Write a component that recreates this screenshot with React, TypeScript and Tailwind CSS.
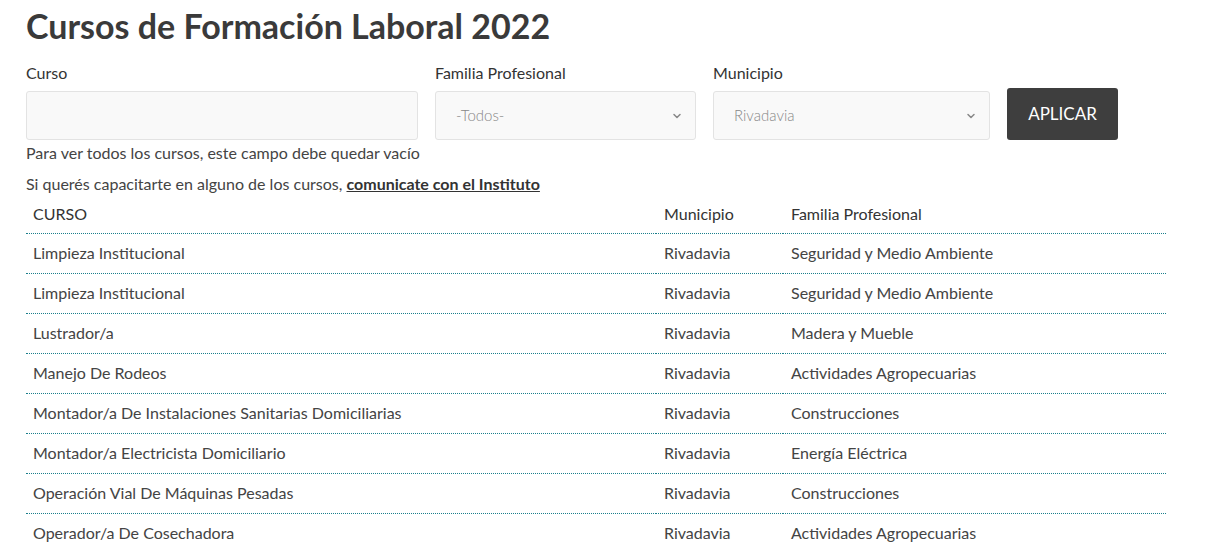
import React from 'react';

const cursos = [
  ['Limpieza Institucional', 'Rivadavia', 'Seguridad y Medio Ambiente'],
  ['Limpieza Institucional', 'Rivadavia', 'Seguridad y Medio Ambiente'],
  ['Lustrador/a', 'Rivadavia', 'Madera y Mueble'],
  ['Manejo De Rodeos', 'Rivadavia', 'Actividades Agropecuarias'],
  ['Montador/a De Instalaciones Sanitarias Domiciliarias', 'Rivadavia', 'Construcciones'],
  ['Montador/a Electricista Domiciliario', 'Rivadavia', 'Energía Eléctrica'],
  ['Operación Vial De Máquinas Pesadas', 'Rivadavia', 'Construcciones'],
  ['Operador/a De Cosechadora', 'Rivadavia', 'Actividades Agropecuarias'],
];

const Chevron = () => (
  <svg className="h-3 w-3 text-[#888]" fill="none" viewBox="0 0 24 24" stroke="currentColor">
    <path strokeLinecap="round" strokeLinejoin="round" strokeWidth={3} d="M6 9l6 6 6-6" />
  </svg>
);

const SelectBox = ({ value, width }: { value: string; width: string }) => (
  <div className={`${width} h-[49px] flex items-center justify-between pl-5 pr-3 bg-[#f9f9f9] border border-[#e3e3e3] rounded-[3px] text-[15px] text-[#888] font-light`}>
    <span>{value}</span>
    <Chevron />
  </div>
);

const App: React.FC = () => {
  return (
    <div className="bg-white min-h-screen pl-[26px] pt-[6px] text-[#333] font-['Lato','Liberation_Sans',sans-serif]">
      {/* Title */}
      <h1 className="text-[34px] leading-[40px] font-bold text-[#3a3a3a]">Cursos de Formación Laboral 2022</h1>

      {/* Filters */}
      <div className="mt-[16px] flex items-end gap-[17px]">
        <div className="w-[392px]">
          <label className="block text-[16px] leading-[22px] text-[#333] mb-[7px]">Curso</label>
          <input className="w-full h-[49px] bg-[#f9f9f9] border border-[#e3e3e3] rounded-[3px] outline-none px-3" />
        </div>
        <div>
          <label className="block text-[16px] leading-[22px] text-[#333] mb-[7px]">Familia Profesional</label>
          <SelectBox value="-Todos-" width="w-[261px]" />
        </div>
        <div>
          <label className="block text-[16px] leading-[22px] text-[#333] mb-[7px]">Municipio</label>
          <SelectBox value="Rivadavia" width="w-[277px]" />
        </div>
        <button className="w-[111px] h-[52px] bg-[#3e3e3e] text-white text-[17px] rounded-[3px]">APLICAR</button>
      </div>

      <p className="mt-[2px] text-[16px] leading-[22px] text-[#444]">Para ver todos los cursos, este campo debe quedar vacío</p>
      <p className="mt-[9px] text-[16px] leading-[22px] text-[#444]">
        Si querés capacitarte en alguno de los cursos, <a className="font-bold text-[#333] underline">comunicate con el Instituto</a>
      </p>

      {/* Table */}
      <table className="w-[1140px] border-collapse text-[16px] text-[#444]">
        <thead>
          <tr className="border-b border-dotted border-[#1b7f8c]">
            <th className="h-[38px] pl-[7px] text-left font-normal text-[#333] w-[630px]">CURSO</th>
            <th className="h-[38px] pl-[8px] text-left font-normal text-[#333] w-[127px]">Municipio</th>
            <th className="h-[38px] pl-[8px] text-left font-normal text-[#333]">Familia Profesional</th>
          </tr>
        </thead>
        <tbody>
          {cursos.map((c, i) => (
            <tr key={i} className="border-b border-dotted border-[#1b7f8c]">
              <td className="h-[40px] pl-[7px]">{c[0]}</td>
              <td className="h-[40px] pl-[8px]">{c[1]}</td>
              <td className="h-[40px] pl-[8px]">{c[2]}</td>
            </tr>
          ))}
        </tbody>
      </table>
    </div>
  );
};

export default App;
